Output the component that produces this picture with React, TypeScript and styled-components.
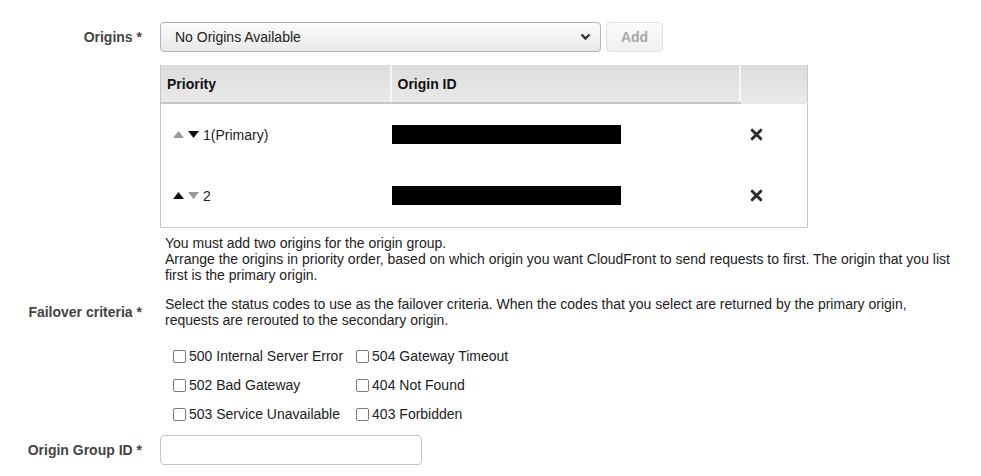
import React from "react";
import styled, { createGlobalStyle } from "styled-components";

const Global = createGlobalStyle`
  html, body { margin: 0; padding: 0; background: #fff; }
  body { font-family: "Liberation Sans", Arial, Helvetica, sans-serif; font-size: 14px; color: #222; }
  * { box-sizing: border-box; }
`;

const Page = styled.div`
  padding: 21px 21px 0 0;
  width: 981px;
`;

const FormRow = styled.div<{ $align?: string; $mt?: number }>`
  display: grid;
  grid-template-columns: 142px 1fr;
  column-gap: 18px;
  align-items: ${(p) => p.$align || "start"};
  margin-top: ${(p) => p.$mt ?? 0}px;
`;

const Label = styled.div<{ $pt?: number }>`
  text-align: right;
  font-weight: bold;
  color: #444;
  font-size: 14px;
  padding-top: ${(p) => p.$pt ?? 0}px;
`;

const Content = styled.div`
  display: flex;
  flex-direction: column;
`;

const SelectLine = styled.div`
  display: flex;
  align-items: center;
  gap: 5px;
`;

const Select = styled.div`
  width: 441px;
  height: 30px;
  border: 1px solid #b3b3b3;
  border-radius: 4px;
  background: linear-gradient(#fbfbfb, #e9e9e9);
  display: flex;
  align-items: center;
  justify-content: space-between;
  padding: 0 9px 0 14px;
  font-size: 14px;
  color: #222;
`;

const AddButton = styled.button`
  width: 57px;
  height: 30px;
  margin-top: 1px;
  border: 1px solid #e0e0e0;
  border-radius: 4px;
  background: linear-gradient(#fbfbfb, #f1f1f1);
  color: #a8a8a8;
  font-family: inherit;
  font-weight: bold;
  font-size: 14px;
`;

const Table = styled.table`
  margin-top: 13px;
  width: 648px;
  border-collapse: collapse;
  border: 1px solid #c8c8c8;
  border-top: none;
`;

const Th = styled.th<{ $w: number; $noline?: boolean }>`
  width: ${(p) => p.$w}px;
  height: 38px;
  text-align: left;
  padding: 0 6px;
  font-size: 14px;
  font-weight: bold;
  color: #111;
  background: linear-gradient(#dcdcdc, #e9e9e9);
  border-bottom: 2px solid ${(p) => (p.$noline ? "#e6e6e6" : "#c8c8c8")};
  border-right: 2px solid #f6f6f6;
  &:last-child { border-right: none; }
`;

const Td = styled.td`
  height: 62px;
  padding: 0;
  vertical-align: middle;
`;

const PriorityCell = styled.div`
  display: flex;
  align-items: center;
  gap: 4px;
  font-size: 14px;
  color: #222;
  padding-left: 12px;
`;

const Redacted = styled.div`
  width: 229px;
  height: 19px;
  background: #000;
  margin-left: 1px;
`;

const RemoveCell = styled.div`
  display: flex;
  justify-content: flex-start;
  padding-left: 10px;
`;

const HelpText = styled.div<{ $mt?: number }>`
  padding-left: 5px;
  line-height: 16px;
  font-size: 14px;
  color: #222;
  margin-top: ${(p) => p.$mt ?? 0}px;
`;

const CheckGrid = styled.div`
  display: grid;
  grid-template-columns: max-content max-content;
  column-gap: 13px;
  grid-auto-rows: 29px;
  padding-left: 13px;
  margin-top: 14px;
`;

const CheckItem = styled.label`
  display: flex;
  align-items: center;
  gap: 3px;
  font-size: 14px;
  color: #222;
`;

const Box = styled.input`
  appearance: none;
  width: 13px;
  height: 13px;
  margin: 0;
  border: 1px solid #7a7a7a;
  border-radius: 2px;
  background: #fff;
`;

const TextInput = styled.input`
  width: 262px;
  height: 30px;
  border: 1px solid #c4c4c4;
  border-radius: 4px;
  background: #fff;
`;

const Tri = ({ dir, active }: { dir: "up" | "down"; active: boolean }) => (
  <svg width="11" height="7" viewBox="0 0 11 7">
    <polygon
      points={dir === "up" ? "0,7 11,7 5.5,0" : "0,0 11,0 5.5,7"}
      fill={active ? "#111" : "#9a9a9a"}
    />
  </svg>
);

const Chevron = () => (
  <svg width="11" height="8" viewBox="0 0 11 8">
    <polyline points="1.5,1.5 5.5,5.5 9.5,1.5" fill="none" stroke="#333" strokeWidth="2.4" />
  </svg>
);

const XIcon = () => (
  <svg width="13" height="13" viewBox="0 0 13 13">
    <path d="M2.2 2.2 L10.8 10.8 M10.8 2.2 L2.2 10.8" stroke="#2b2b2b" strokeWidth="3" strokeLinecap="round" />
  </svg>
);

const checks = [
  "500 Internal Server Error",
  "504 Gateway Timeout",
  "502 Bad Gateway",
  "404 Not Found",
  "503 Service Unavailable",
  "403 Forbidden",
];

export default function App() {
  return (
    <Page>
      <Global />
      <FormRow>
        <Label $pt={8}>Origins *</Label>
        <Content>
          <SelectLine>
            <Select>
              <span>No Origins Available</span>
              <Chevron />
            </Select>
            <AddButton>Add</AddButton>
          </SelectLine>
          <Table>
            <thead>
              <tr>
                <Th $w={230}>Priority</Th>
                <Th $w={349}>Origin ID</Th>
                <Th $w={68} $noline />
              </tr>
            </thead>
            <tbody>
              <tr>
                <Td>
                  <PriorityCell>
                    <Tri dir="up" active={false} />
                    <Tri dir="down" active />
                    <span>1(Primary)</span>
                  </PriorityCell>
                </Td>
                <Td>
                  <Redacted />
                </Td>
                <Td>
                  <RemoveCell>
                    <XIcon />
                  </RemoveCell>
                </Td>
              </tr>
              <tr>
                <Td>
                  <PriorityCell>
                    <Tri dir="up" active />
                    <Tri dir="down" active={false} />
                    <span>2</span>
                  </PriorityCell>
                </Td>
                <Td>
                  <Redacted />
                </Td>
                <Td>
                  <RemoveCell>
                    <XIcon />
                  </RemoveCell>
                </Td>
              </tr>
            </tbody>
          </Table>
          <HelpText $mt={7}>
            You must add two origins for the origin group.
            <br />
            Arrange the origins in priority order, based on which origin you want CloudFront to send requests to first. The origin that you list first is the primary origin.
          </HelpText>
        </Content>
      </FormRow>
      <FormRow $align="center" $mt={13}>
        <Label>Failover criteria *</Label>
        <HelpText>
          Select the status codes to use as the failover criteria. When the codes that you select are returned by the primary origin, requests are rerouted to the secondary origin.
        </HelpText>
      </FormRow>
      <FormRow>
        <div />
        <CheckGrid>
          {checks.map((c) => (
            <CheckItem key={c}>
              <Box type="checkbox" />
              {c}
            </CheckItem>
          ))}
        </CheckGrid>
      </FormRow>
      <FormRow $align="center" $mt={6}>
        <Label>Origin Group ID *</Label>
        <TextInput />
      </FormRow>
    </Page>
  );
}
